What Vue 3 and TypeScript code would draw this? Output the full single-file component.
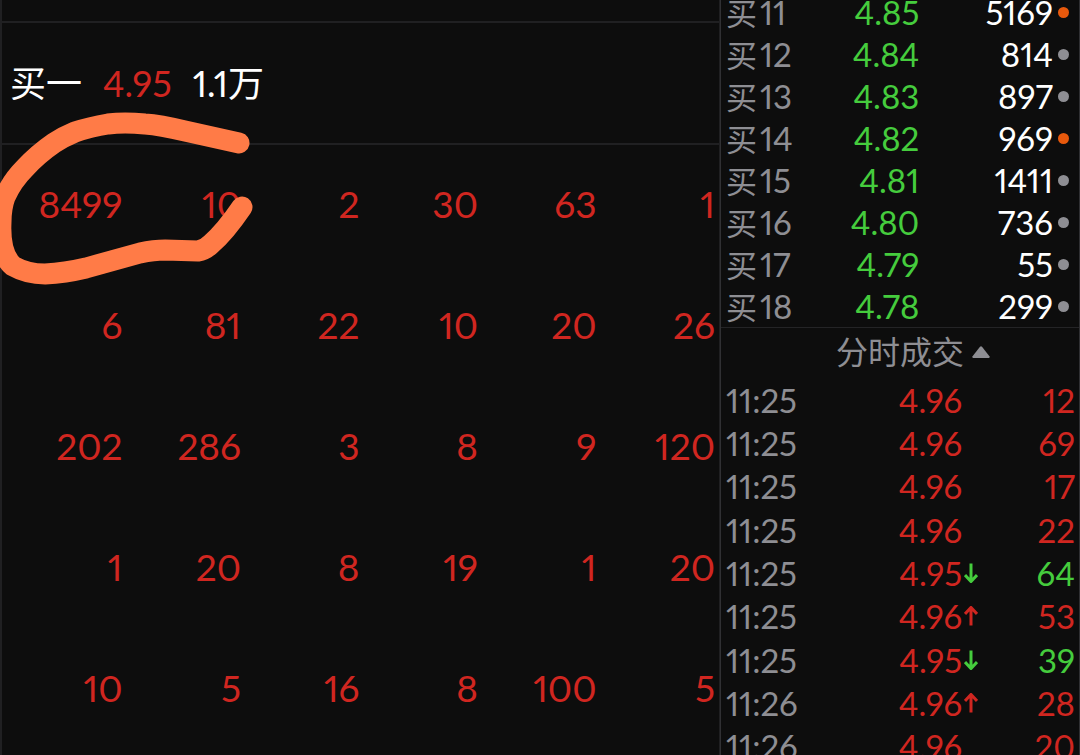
<script setup lang="ts">
interface Level { no: number; price: string; volume: number; hot?: boolean }
interface Trade { time: string; price: string; dir?: 'up' | 'down'; volume: number }

const queue: number[][] = [
  [8499, 10, 2, 30, 63, 1],
  [6, 81, 22, 10, 20, 26],
  [202, 286, 3, 8, 9, 120],
  [1, 20, 8, 19, 1, 20],
  [10, 5, 16, 8, 100, 5],
]

const levels: Level[] = [
  { no: 11, price: '4.85', volume: 5169, hot: true },
  { no: 12, price: '4.84', volume: 814 },
  { no: 13, price: '4.83', volume: 897 },
  { no: 14, price: '4.82', volume: 969, hot: true },
  { no: 15, price: '4.81', volume: 1411 },
  { no: 16, price: '4.80', volume: 736 },
  { no: 17, price: '4.79', volume: 55 },
  { no: 18, price: '4.78', volume: 299 },
]

const trades: Trade[] = [
  { time: '11:25', price: '4.96', volume: 12 },
  { time: '11:25', price: '4.96', volume: 69 },
  { time: '11:25', price: '4.96', volume: 17 },
  { time: '11:25', price: '4.96', volume: 22 },
  { time: '11:25', price: '4.95', dir: 'down', volume: 64 },
  { time: '11:25', price: '4.96', dir: 'up', volume: 53 },
  { time: '11:25', price: '4.95', dir: 'down', volume: 39 },
  { time: '11:26', price: '4.96', dir: 'up', volume: 28 },
  { time: '11:26', price: '4.96', volume: 20 },
]
</script>

<template>
  <main class="screen">
    <section class="queue">
      <header class="queue-head">
        <span>买一</span>
        <span class="red">4.95</span>
        <span>1.1万</span>
      </header>
      <table class="queue-table">
        <tbody>
          <tr v-for="(row, r) in queue" :key="r">
            <td v-for="(n, c) in row" :key="c">{{ n }}</td>
          </tr>
        </tbody>
      </table>
      <svg class="marker" viewBox="0 0 270 300" width="270" height="300" aria-hidden="true">
        <path d="M239 143 L185 131 Q160 125 145 124 Q124 122 108 124 Q90 127 75 132 Q63 137 54 143 Q38 154 25 168 Q12 181 5 197 Q1 208 1 222 C0 243 3 257 13 266 Q27 274 45 274 Q65 273 86 268 L140 253 Q154 250 165 250 L198 251 Q205 250 211 244 Q225 232 242 207" />
      </svg>
    </section>

    <aside class="side">
      <table class="book">
        <tbody>
          <tr v-for="l in levels" :key="l.no">
            <th scope="row"><span class="cjk">买</span>{{ l.no }}</th>
            <td class="price green">{{ l.price }}</td>
            <td class="volume">{{ l.volume }}</td>
            <td class="mark"><i class="dot" :class="{ hot: l.hot }"></i></td>
          </tr>
        </tbody>
      </table>

      <button type="button" class="title">
        分时成交
        <svg width="18" height="12" viewBox="0 0 18 12" aria-hidden="true"><path d="M8 0.7 Q9 0 10 0.7 L17.6 10.6 Q18 12 16.8 12 H1.2 Q0 12 0.4 10.6 Z" /></svg>
      </button>

      <table class="trades">
        <tbody>
          <tr v-for="(t, i) in trades" :key="i">
            <th scope="row">{{ t.time }}</th>
            <td class="price red">{{ t.price }}</td>
            <td class="arrow">
              <svg v-if="t.dir" :class="t.dir" width="14" height="20" viewBox="0 0 14 20" aria-hidden="true">
                <path d="M7 19.5 V2 M1 8 L7 1.5 L13 8" />
              </svg>
            </td>
            <td class="volume" :class="t.dir === 'down' ? 'green' : 'red'">{{ t.volume }}</td>
          </tr>
        </tbody>
      </table>
    </aside>
  </main>
</template>

<style>
html, body { margin: 0; background: #0d0d0d; }
</style>

<style scoped>
.screen {
  display: grid;
  grid-template-columns: 2fr 1fr;
  height: 100vh;
  overflow: hidden;
  background: #0d0d0d;
  color: #fff;
  font-family: Lato, "Noto Sans CJK SC", sans-serif;
  font-variant-numeric: proportional-nums;
  font-size: 33px;
  line-height: 36px;
}
.red { color: #d02620; }
.green { color: #45cc3d; }
table { border-collapse: collapse; table-layout: fixed; width: 100%; }
td, th { padding: 0; font-weight: 400; }

.queue {
  position: relative;
  box-sizing: border-box;
  border-left: 2px solid #202022;
  border-right: 1px solid #202022;
  padding-top: 21px;
}
.queue-head {
  display: flex;
  align-items: center;
  gap: 21px;
  box-sizing: border-box;
  height: 124px;
  padding: 0 8px;
  border: solid #202022;
  border-width: 2px 0;
  font-size: 36px;
}
.queue-table { width: calc(100% - 6px); margin: 0 4px 0 2px; }
.queue-table tr { height: 121px; }
.queue-table td { padding-bottom: 4px; text-align: right; color: #d02620; font-size: 37px; }
.marker { position: absolute; left: -2px; top: 0; }
.marker path { fill: none; stroke: #ff7b47; stroke-width: 21; stroke-linecap: round; stroke-linejoin: round; }

.side {
  display: flex;
  flex-direction: column;
  border-left: 1px solid #303033;
  border-right: 1px solid #303033;
}
.book { margin-top: -9px; }
.book tr { height: 42px; }
th { text-align: left; color: #8e8e93; padding-left: 5px; }
th .cjk { font-size: 31px; line-height: 32px; margin-right: 3px; }
.price, .volume { text-align: right; }
.book th { width: 27%; }
.book .price { width: 27%; }
.mark { width: 26px; }
.dot { display: block; width: 11px; height: 11px; margin-left: 5px; border-radius: 50%; background: #8e8e93; }
.dot.hot { background: #e8590c; }

.title {
  display: flex;
  align-items: center;
  justify-content: center;
  gap: 8px;
  height: 51px;
  padding: 0 0 2px 26px;
  border: 0;
  border-top: 1px solid #242426;
  background: none;
  color: #8e8e93;
  font: inherit;
  font-size: 32px;
}
.title svg { fill: #8e8e93; }

.trades { height: 390px; }
.trades th { width: 30%; }
.trades .price { width: 36%; }
.arrow { width: 24px; }
.arrow svg { display: block; margin-left: 2px; fill: none; stroke: #d02620; stroke-width: 3; }
.arrow .down { transform: rotate(180deg); stroke: #45cc3d; }
.trades .volume { padding-right: 4px; }
</style>
